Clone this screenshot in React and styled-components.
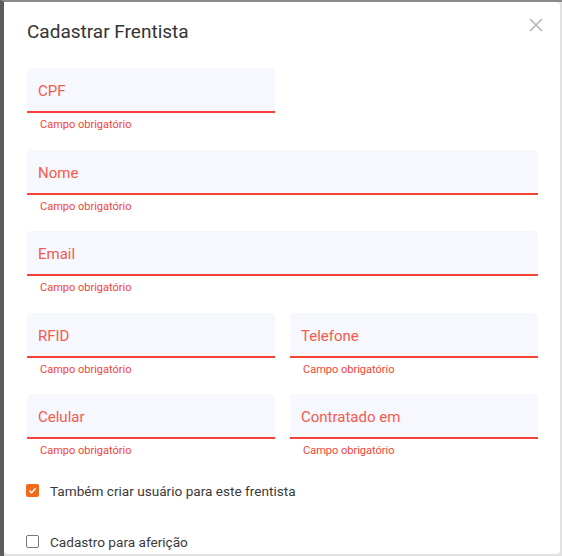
import React from 'react';
import styled, { createGlobalStyle } from 'styled-components';

const GlobalStyle = createGlobalStyle`
  html, body {
    margin: 0;
    padding: 0;
    background: #e2e2e2;
    font-family: Roboto, "Liberation Sans", Arial, sans-serif;
  }
`;

const Backdrop = styled.div`
  width: 562px;
  height: 556px;
  box-sizing: border-box;
  border-left: 4px solid #5d5d5d;
  border-top: 2px solid #8a8a8a;
  padding-right: 2px;
  overflow: hidden;
`;

const Dialog = styled.div`
  position: relative;
  height: 552px;
  background: #fff;
  border-radius: 0 4px 4px 4px;
  box-sizing: border-box;
  padding: 19px 20px 0 23px;
  overflow: hidden;
`;

const Title = styled.h2`
  margin: 0 0 25px;
  font-size: 19px;
  font-weight: 400;
  color: #333;
  line-height: 22px;
`;

const Close = styled.button`
  position: absolute;
  top: 14px;
  right: 15px;
  width: 18px;
  height: 18px;
  padding: 0;
  border: 0;
  background: none;
  cursor: pointer;
`;

const Grid = styled.div`
  display: grid;
  grid-template-columns: 248px 248px;
  column-gap: 15px;
  width: 511px;
`;

const Field = styled.div`
  grid-column: ${(p) => (p.$full ? '1 / span 2' : 'auto')};
`;

const Input = styled.div`
  height: 45px;
  box-sizing: border-box;
  background: #f7f8fd;
  border-radius: 4px 4px 0 0;
  border-bottom: 2px solid #f44336;
  padding: 12px 11px 0;
  font-size: 15px;
  line-height: 22px;
  color: #f55a4e;
`;

const Helper = styled.div`
  padding: 5px 0 0 13px;
  height: 31.5px;
  font-size: 11px;
  line-height: 14px;
  color: #f44336;
`;

const Checks = styled.div`
  display: flex;
  flex-direction: column;
  gap: 31px;
  margin-top: 5px;
`;

const CheckRow = styled.label`
  display: flex;
  align-items: center;
  gap: 11px;
  font-size: 13.6px;
  color: #3a3a3a;
  line-height: 20px;
`;

const Box = styled.span`
  width: 13px;
  height: 13px;
  box-sizing: border-box;
  border-radius: 2px;
  margin-left: -1px;
  display: flex;
  align-items: center;
  justify-content: center;
  background: ${(p) => (p.$checked ? '#f26a1b' : '#fff')};
  border: ${(p) => (p.$checked ? 'none' : '1.5px solid #777')};
`;

const fields = [
  { label: 'CPF' },
  { gap: true },
  { label: 'Nome', full: true },
  { label: 'Email', full: true },
  { label: 'RFID' },
  { label: 'Telefone' },
  { label: 'Celular' },
  { label: 'Contratado em' },
];

export default function App() {
  return (
    <>
      <GlobalStyle />
      <Backdrop>
        <Dialog>
          <Title>Cadastrar Frentista</Title>
          <Close aria-label="Fechar">
            <svg width="18" height="18" viewBox="0 0 18 18">
              <path d="M3 3 L15 15 M15 3 L3 15" stroke="#b5b5b5" strokeWidth="1.6" />
            </svg>
          </Close>
          <Grid>
            {fields.map((f, i) =>
              f.gap ? (
                <div key={i} />
              ) : (
                <Field key={i} $full={f.full}>
                  <Input>{f.label}</Input>
                  <Helper>Campo obrigatório</Helper>
                </Field>
              )
            )}
          </Grid>
          <Checks>
            <CheckRow>
              <Box $checked>
                <svg width="9" height="9" viewBox="0 0 10 10">
                  <path d="M1.5 5 L4 7.5 L8.5 2.5" stroke="#fff" strokeWidth="1.6" fill="none" />
                </svg>
              </Box>
              Também criar usuário para este frentista
            </CheckRow>
            <CheckRow>
              <Box />
              Cadastro para aferição
            </CheckRow>
          </Checks>
        </Dialog>
      </Backdrop>
    </>
  );
}
